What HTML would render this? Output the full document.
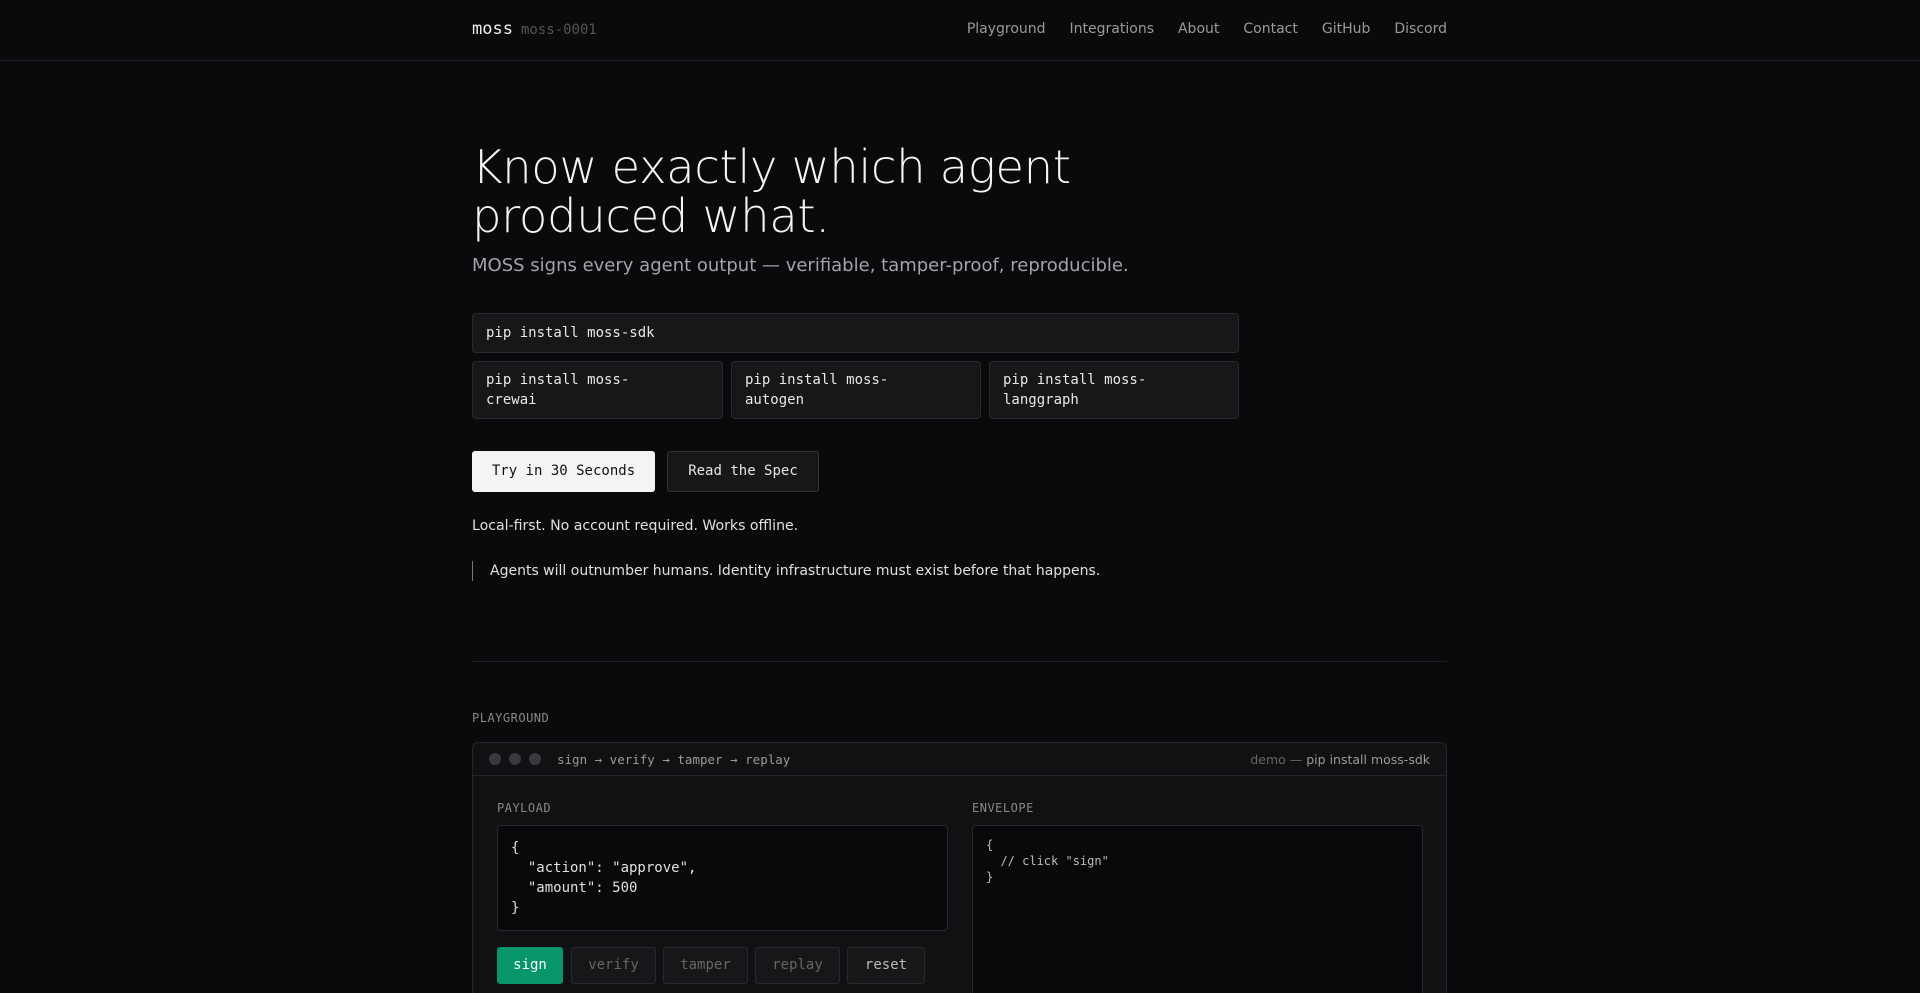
<!DOCTYPE html>
<html style="height:993px;overflow:hidden"><head><meta charset="utf-8"><style>
*{box-sizing:border-box;margin:0;padding:0}
body{width:1920px;height:993px;overflow:hidden;position:relative;background:#0a0a0c;color:#e6e6e6;font-family:"DejaVu Sans","Liberation Sans",sans-serif}
.mono{font-family:"DejaVu Sans Mono","Liberation Mono",monospace}
.nav{height:61px;border-bottom:1px solid #1e1e22;position:relative}
.logo{position:absolute;left:472px;top:19px;font-size:17px;color:#f0f0f0}
.logo span{color:#555;font-size:14px;margin-left:8px}
.links{position:absolute;right:473px;top:21px;font-size:14px;color:#9a9a9a}
.links a{margin-left:24px}
h1{position:absolute;left:472px;top:143px;font-size:46.6px;font-weight:200;line-height:49px;color:#f4f4f4;letter-spacing:-0.4px}
.sub{position:absolute;left:472px;top:255px;font-size:18px;color:#a3a3a8}
.box{position:absolute;background:#17171a;border:1px solid #2a2a2e;border-radius:4px;font-size:14px;color:#e8e8e8;padding:0 13px;line-height:20px}
.btn{position:absolute;top:451px;height:41px;border-radius:3px;font-size:14px;line-height:39px;text-align:center}
.note{position:absolute;left:472px;top:518px;font-size:14.1px;color:#e0e0e0}
.quote{position:absolute;left:472px;top:561px;height:20px;border-left:1px solid #777;padding-left:17px;font-size:14px;color:#e0e0e0;line-height:20px}
.hr{position:absolute;left:472px;width:975px;top:661px;border-top:1px solid #1e1e22}
.lbl{position:absolute;font-size:12px;color:#888;letter-spacing:.5px}
.panel{position:absolute;left:472px;top:742px;width:975px;height:251px;background:#111114;border:1px solid #26262a;border-bottom:none;border-radius:6px 6px 0 0;overflow:hidden}
.ph{height:33px;border-bottom:1px solid #26262a;position:relative}
.dot{position:absolute;top:10px;width:12px;height:12px;border-radius:50%;background:#3a3a3e}
.code{position:absolute;background:#09090b;border:1px solid #2a2a2e;border-radius:4px;color:#e0e0e0}
.b{position:absolute;top:204px;height:37px;border-radius:3px;border:1px solid #2a2a2e;background:#17171a;color:#666;font-size:14px;line-height:35px;text-align:center}
</style></head><body>
<div class="nav">
<div class="logo mono">moss<span>moss-0001</span></div>
<div class="links"><a>Playground</a><a>Integrations</a><a>About</a><a>Contact</a><a>GitHub</a><a>Discord</a></div>
</div>
<h1>Know exactly which agent<br>produced what.</h1>
<div class="sub">MOSS signs every agent output — verifiable, tamper-proof, reproducible.</div>
<div class="box mono" style="left:472px;top:313px;width:767px;height:40px;line-height:38px">pip install moss-sdk</div>
<div class="box mono" style="left:472px;top:361px;width:251px;height:58px;padding-top:8px">pip install moss-<br>crewai</div>
<div class="box mono" style="left:731px;top:361px;width:250px;height:58px;padding-top:8px">pip install moss-<br>autogen</div>
<div class="box mono" style="left:989px;top:361px;width:250px;height:58px;padding-top:8px">pip install moss-<br>langgraph</div>
<div class="btn mono" style="left:472px;width:183px;background:#f4f4f4;color:#111;line-height:41px">Try in 30 Seconds</div>
<div class="btn mono" style="left:667px;width:152px;background:#17171a;border:1px solid #333;color:#e6e6e6">Read the Spec</div>
<div class="note">Local-first. No account required. Works offline.</div>
<div class="quote">Agents will outnumber humans. Identity infrastructure must exist before that happens.</div>
<div class="hr"></div>
<div class="lbl mono" style="left:472px;top:711px">PLAYGROUND</div>
<div class="panel">
<div class="ph">
<div class="dot" style="left:16px"></div><div class="dot" style="left:36px"></div><div class="dot" style="left:56px"></div>
<div class="mono" style="position:absolute;left:84px;top:9px;font-size:12.5px;color:#9a9a9a">sign → verify → tamper → replay</div>
<div style="position:absolute;right:16px;top:9px;font-size:12.5px;color:#666">demo — <span style="color:#9a9a9a">pip install moss-sdk</span></div>
</div>
<div class="lbl mono" style="left:24px;top:58px">PAYLOAD</div>
<div class="lbl mono" style="left:499px;top:58px">ENVELOPE</div>
<div class="code mono" style="left:24px;top:82px;width:451px;height:106px;padding:12px 13px;font-size:14px;line-height:20px;white-space:pre">{
  "action": "approve",
  "amount": 500
}</div>
<div class="code mono" style="left:499px;top:82px;width:451px;height:200px;padding:11px 13px;font-size:12px;line-height:16px;white-space:pre;color:#bbb">{
  // click "sign"
}</div>
<div class="b mono" style="left:24px;width:66px;background:#079669;border-color:#079669;color:#fff">sign</div>
<div class="b mono" style="left:98px;width:85px">verify</div>
<div class="b mono" style="left:190px;width:85px">tamper</div>
<div class="b mono" style="left:282px;width:85px">replay</div>
<div class="b mono" style="left:374px;width:78px;color:#bbb">reset</div>
</div>
</body></html>
